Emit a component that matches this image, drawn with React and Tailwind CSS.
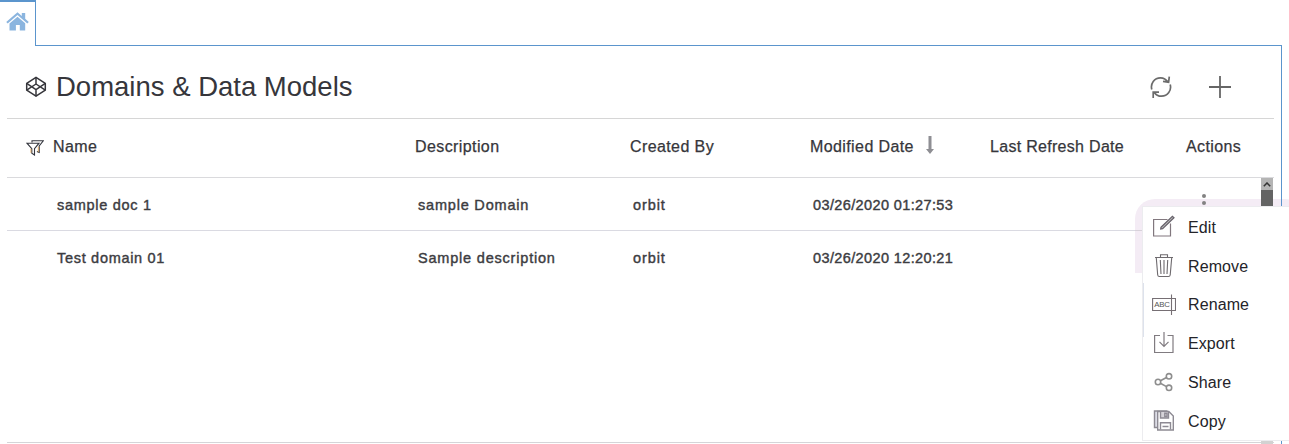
import React from "react";

const cols = "grid grid-cols-[361px_215px_180px_180px_195px_1fr]";

function HomeIcon() {
  return (
    <svg width="23" height="19" viewBox="0 0 23 19" fill="#8bb5df">
      <path d="M11.5 0.2 15.800 4V1h3.400v5.700l3.600 3.200-1.500 1.700-9.800-8.600-9.800 8.600L.2 9.900z" />
      <path d="M11.5 4.700 19.200 11.300V18.500h-5.400v-5.400H9.900v5.400H3.500V11.600z" />
    </svg>
  );
}

function CubeIcon() {
  return (
    <svg width="22" height="22" viewBox="0 0 22 22" fill="none" stroke="#36363b" strokeWidth="1.5" strokeLinejoin="round">
      <path d="M11 1.3 20.3 7.4V14.2L11 20.2 1.7 14.2V7.4z" />
      <path d="M1.7 7.4 11 13.7 20.3 7.4M1.7 14.2 11 8 20.3 14.2M11 1.3V8M11 13.7V20.2" />
    </svg>
  );
}

function FilterIcon() {
  return (
    <svg width="18" height="16" viewBox="0 0 18 16" fill="none" strokeWidth="1.1">
      <path d="M6 2.6V.8H17.3L13.2 6v6.5l-2.3-1" stroke="#34363e" />
      <path d="M1 3.2H13L8.5 8.6V15L5.8 13.2V8.6z" stroke="#34363e" fill="#fff" />
      <path d="M4.9 8.8V12.8M12.3 6.7V12" stroke="#e5a44f" strokeWidth=".8" />
    </svg>
  );
}

function RefreshIcon() {
  return (
    <svg width="22" height="24" viewBox="0 0 22 24" fill="none" stroke="#6b6b6b" strokeWidth="1.7">
      <path d="M1.8 14.5C.2 8.500 4.300 2.800 10.500 2.800c3.200 0 5.600 1.400 7.600 4.300M19.300 1.600 18.600 7.200 13 6.400" />
      <path d="M20.200 9.500C21.800 15.500 17.700 21.200 11.500 21.200c-3.200 0-5.600-1.400-7.600-4.300M3.200 23V17.200H9" />
    </svg>
  );
}

function EditIcon() {
  return (
    <svg width="24" height="24" viewBox="0 0 24 24" fill="none" stroke="#81777e" strokeWidth="1.2">
      <path d="M15.500 4.500H1.600V21H18.500V8.500" />
      <path d="M9 12.200 20.400 1.300 22 2.800 10.600 13.600 8.700 14z" fill="#bbb" stroke="#66616a" />
    </svg>
  );
}

function TrashIcon() {
  return (
    <svg width="24" height="24" viewBox="0 0 24 24" fill="none" stroke="#6e6a6e" strokeWidth="1.100">
      <path d="M3 3.500H21M8.500 3.500V.8H15.500V3.500M4.300 4 5.700 21Q5.900 22.500 7.300 22.500H16.500Q18 22.500 18.200 21L19.700 4M8.300 6 9 20M12 6V20M15.700 6 15 20" />
    </svg>
  );
}

function RenameIcon() {
  return (
    <svg width="24" height="24" viewBox="0 0 24 24" fill="none" stroke="#766f74" strokeWidth="1.100">
      <path d="M.6 5.500H23.500V17.500H.6zM19.500 1.500V22" />
      <text x="2.200" y="14.200" fontSize="7.800" fontFamily="Liberation Sans" fill="#555" stroke="none" textLength="15.800">ABC</text>
    </svg>
  );
}

function ExportIcon() {
  return (
    <svg width="24" height="24" viewBox="0 0 24 24" fill="none" stroke="#807b80" strokeWidth="1.200">
      <path d="M8 3.500H2.600V20.500H21V3.500H15.500M12 -1.500V14M7.500 9.800 12 14.500 16.500 9.800" overflow="visible" />
    </svg>
  );
}

function ShareIcon() {
  return (
    <svg width="24" height="24" viewBox="0 0 24 24" fill="none" stroke="#8e8e8e" strokeWidth="1.600">
      <circle cx="6" cy="11" r="2.700" />
      <circle cx="17" cy="5.300" r="2.700" />
      <circle cx="17" cy="16.800" r="2.700" />
      <path d="M8.400 9.700 14.500 6.500M8.400 12.300 14.500 15.600" />
    </svg>
  );
}

function CopyIcon() {
  return (
    <svg width="24" height="24" viewBox="0 0 24 24" fill="none" stroke="#8d8a93" strokeWidth="1.400">
      <path d="M15.500 2H2.500V18.500H5.500" fill="#dcdce6" />
      <path d="M5.700 2.500H16.800L21.300 7V21H5.700z" fill="#fff" />
      <path d="M8.500 3V9H16.500V3" fill="#d5d3d8" />
      <path d="M12.800 4.300H15V7.500H12.800zM8.500 20.500V13.700H18.500V20.500M10.500 17.500H16.500" />
    </svg>
  );
}

const menu = [
  ["Edit", EditIcon],
  ["Remove", TrashIcon],
  ["Rename", RenameIcon],
  ["Export", ExportIcon],
  ["Share", ShareIcon],
  ["Copy", CopyIcon],
];

const rows = [
  ["sample doc 1", "sample Domain", "orbit", "03/26/2020 01:27:53"],
  ["Test domain 01", "Sample description", "orbit", "03/26/2020 12:20:21"],
];

const rowSpacing = [
  "tracking-[0.7px]",
  "tracking-[0.8px]",
  "tracking-[0.9px]",
  "tracking-[0.38px]",
];

export default function App() {
  return (
    <div className="relative flex h-[444px] w-[1289px] flex-col overflow-hidden bg-white font-['Liberation_Sans',Arial,sans-serif] text-[#36363b]">
      <div className="flex h-[46px] shrink-0">
        <div className="flex w-9 justify-center border-t-2 border-r border-[#5b95cd] pt-[10px]">
          <HomeIcon />
        </div>
        <div className="w-[1246px] border-b border-[#5b95cd]" />
      </div>
      <div className="flex w-[1282px] flex-1 flex-col border-r border-[#5b95cd] pr-[7px] pl-[7px]">
        <header className="flex h-[73px] items-center border-b border-[#d6d6d6] pt-[9px] pr-[43px] pl-[18px]">
          <CubeIcon />
          <h1 className="ml-[9px] flex-1 pt-px text-[27.5px] leading-8 whitespace-nowrap">Domains &amp; Data Models</h1>
          <RefreshIcon />
          <svg className="ml-[37px]" width="22" height="22" viewBox="0 0 22 22" stroke="#666" strokeWidth="1.8">
            <path d="M0 11H22M11 0V22" />
          </svg>
        </header>
        <div className={`${cols} h-[59px] items-center border-b border-[#dadadd] pl-[47px] text-[16px] leading-5 tracking-[0.4px] whitespace-nowrap [-webkit-text-stroke:0.25px_#36363b]`}>
          <div className="-ml-7 flex items-center gap-[9px]">
            <FilterIcon />
            <span className="-mt-0.5">Name</span>
          </div>
          <span className="-mt-0.5">Description</span>
          <span className="-mt-0.5">Created By</span>
          <span className="-mt-0.5 flex items-center gap-[11px]">
            Modified Date
            <svg className="-mt-1" width="10" height="19" viewBox="0 0 10 19" fill="#8e8e93">
              <path d="M3.500 0h3v13H9L5 18 1 13h2.500z" />
            </svg>
          </span>
          <span className="-mt-0.5 tracking-[0.3px]">Last Refresh Date</span>
          <span className="-mt-0.5 ml-px">Actions</span>
        </div>
        <div className="mb-px flex min-h-0 flex-1 border-b border-[#d5d5d8]">
          <div className="w-[1254px]">
            {rows.map((r, i) => (
              <div key={r[0]} className={`${cols} h-[53px] items-center pl-[50px] text-[14.5px] leading-5 whitespace-nowrap text-[#3c3c41] [-webkit-text-stroke:0.4px_#3c3c41] ${i === 0 ? "border-b border-[#dadae2] pt-0.5" : ""}`}>
                {r.map((c, j) => (
                  <span key={j} className={rowSpacing[j]}>{c}</span>
                ))}
              </div>
            ))}
          </div>
          <div className="flex w-3 flex-col bg-[#646464]">
            <div className="flex h-3 items-center justify-center bg-[#b4b4b4]">
              <svg width="8" height="5" viewBox="0 0 8 5" fill="none" stroke="#333" strokeWidth="1.500">
                <path d="M.8 4.300 4 1 7.200 4.300" />
              </svg>
            </div>
          </div>
        </div>
      </div>
      <div className="absolute top-[199px] left-[1135px] h-[74px] w-[170px] rounded-t-[20px] bg-[#f4ecf5]" />
      <div className="absolute top-[230px] left-[1135px] h-px w-2 bg-[#d8d2da]" />
      <div className="absolute top-[194px] left-[1202px] flex flex-col gap-[3px]">
        <i className="size-1 rounded-full bg-[#828282]" />
        <i className="size-1 rounded-full bg-[#828282]" />
      </div>
      <div className="absolute top-[190px] left-[1261px] h-4 w-3 bg-[#646464]" />
      <div className="absolute top-[199px] left-[1281px] h-2 w-px bg-[#5b95cd]" />
      <div className="absolute top-[441px] left-[1261px] h-[3px] w-3 bg-[#d2d2d2]" />
      <div className="absolute top-[206px] left-[1142px] h-[235px] w-[160px] border border-[#ececef] bg-white pt-px pl-[9px]">
        {menu.map(([label, Icon]) => (
          <div key={label} className="flex h-[38.8px] items-center gap-[12px] text-[16px] leading-5 tracking-[0.1px] text-[#242429]">
            <Icon />
            <span className="pt-px">{label}</span>
          </div>
        ))}
      </div>
      <div className="absolute top-[283px] left-[1143px] h-[54px] w-px bg-[#dde2ec]" />
    </div>
  );
}
